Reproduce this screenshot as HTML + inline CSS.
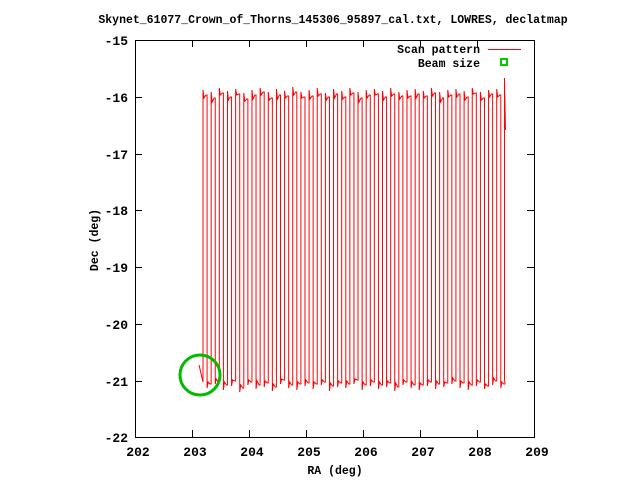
<!DOCTYPE html>
<html><head><meta charset="utf-8"><style>
html,body{margin:0;padding:0;background:#fff;}
svg{display:block}
text{font-family:"Liberation Mono",monospace;font-weight:bold;font-size:11.5px;fill:#000}
.b{font-size:13px}
</style></head><body>
<svg width="640" height="480" xmlns="http://www.w3.org/2000/svg">
<rect width="640" height="480" fill="#fff"/>
<text x="333" y="23" text-anchor="middle">Skynet_61077_Crown_of_Thorns_145306_95897_cal.txt, LOWRES, declatmap</text>
<g stroke="#000" stroke-width="1" fill="none" shape-rendering="crispEdges">
<rect x="135.5" y="40.5" width="399" height="397"/>
<path d="M135 97.5h7M135 154.5h7M135 210.5h7M135 267.5h7M135 324.5h7M135 381.5h7M534 97.5h-7M534 154.5h-7M534 210.5h-7M534 267.5h-7M534 324.5h-7M534 381.5h-7
M192.5 437v-7M249.5 437v-7M306.5 437v-7M363.5 437v-7M420.5 437v-7M477.5 437v-7M192.5 40v7M249.5 40v7M306.5 40v7M363.5 40v7M420.5 40v7M477.5 40v7"/>
</g>
<g text-anchor="end" class="b">
<text class="b" x="128" y="45">-15</text><text class="b" x="128" y="102">-16</text><text class="b" x="128" y="159">-17</text><text class="b" x="128" y="215">-18</text><text class="b" x="128" y="272">-19</text><text class="b" x="128" y="329">-20</text><text class="b" x="128" y="386">-21</text><text class="b" x="128" y="442">-22</text>
</g>
<g text-anchor="middle">
<text class="b" x="138" y="456">202</text><text class="b" x="195" y="456">203</text><text class="b" x="252" y="456">204</text><text class="b" x="309" y="456">205</text><text class="b" x="366" y="456">206</text><text class="b" x="423" y="456">207</text><text class="b" x="480" y="456">208</text><text class="b" x="537" y="456">209</text>
<text x="335" y="474">RA (deg)</text>
<text transform="translate(98,240) rotate(-90)">Dec (deg)</text>
</g>
<text x="480" y="53" text-anchor="end">Scan pattern</text>
<text x="480" y="67" text-anchor="end">Beam size</text>
<line x1="488" y1="49.5" x2="521" y2="49.5" stroke="#f00" stroke-width="1"/>
<rect x="501" y="59" width="6" height="6" fill="none" stroke="#0c0" stroke-width="2"/>
<g fill="none" stroke="#f00" stroke-width="1" transform="translate(203,0) scale(0.995,1) translate(-203,0)">
<path d="M199 365 L203 382 V90 l1,8 l2,-3 h1.1 V388 l1,-6 l2,2 h1.1 V92 l1,10 l2,-4 h1.1 V384 l1,-5 l2,3 h1.1 V88 l1,7 l2,-2 h1.1 V390 l1,-8 l2,3 h1.1 V91 l1,9 l2,-3 h1.1 V386 l1,-6 l2,1 h1.1 V89 l1,6 l2,-1 h1.1 V392 l1,-7 l2,3 h1.1 V93 l1,8 l2,-2 h1.1 V385 l1,-5 l2,2 h1.1 V90 l1,9 l2,-4 h1.1 V389 l1,-8 l2,4 h1.1 V88 l1,7 l2,-3 h1.1 V387 l1,-6 l2,2 h1.1 V92 l1,8 l2,-2 h1.1 V391 l1,-7 l2,3 h1.1 V89 l1,10 l2,-4 h1.1 V384 l1,-5 l2,1 h1.1 V91 l1,7 l2,-2 h1.1 V388 l1,-6 l2,3 h1.1 V87 l1,8 l2,-3 h1.1 V390 l1,-8 l2,2 h1.1 V92 l1,6 l2,-1 h1.1 V386 l1,-6 l2,3 h1.1 V90 l1,9 l2,-3 h1.1 V389 l1,-7 l2,2 h1.1 V88 l1,8 l2,-2 h1.1 V385 l1,-5 l2,2 h1.1 V93 l1,7 l2,-3 h1.1 V391 l1,-8 l2,3 h1.1 V89 l1,9 l2,-4 h1.1 V387 l1,-6 l2,2 h1.1 V91 l1,8 l2,-2 h1.1 V388 l1,-7 l2,3 h1.1 V88 l1,7 l2,-2 h1.1 V384 l1,-5 l2,1 h1.1 V92 l1,10 l2,-4 h1.1 V390 l1,-8 l2,3 h1.1 V90 l1,8 l2,-3 h1.1 V386 l1,-6 l2,2 h1.1 V89 l1,6 l2,-1 h1.1 V389 l1,-7 l2,3 h1.1 V91 l1,9 l2,-3 h1.1 V387 l1,-6 l2,2 h1.1 V88 l1,8 l2,-2 h1.1 V391 l1,-8 l2,4 h1.1 V92 l1,7 l2,-3 h1.1 V385 l1,-5 l2,2 h1.1 V90 l1,8 l2,-2 h1.1 V388 l1,-6 l2,3 h1.1 V89 l1,9 l2,-4 h1.1 V390 l1,-7 l2,2 h1.1 V91 l1,7 l2,-2 h1.1 V386 l1,-6 l2,2 h1.1 V88 l1,8 l2,-3 h1.1 V389 l1,-8 l2,3 h1.1 V92 l1,10 l2,-4 h1.1 V387 l1,-5 l2,1 h1.1 V90 l1,7 l2,-2 h1.1 V384 l1,-6 l2,3 h1.1 V89 l1,8 l2,-3 h1.1 V388 l1,-7 l2,2 h1.1 V91 l1,9 l2,-3 h1.1 V390 l1,-8 l2,3 h1.1 V88 l1,6 l2,-1 h1.1 V386 l1,-6 l2,2 h1.1 V92 l1,8 l2,-2 h1.1 V389 l1,-5 l2,2 h1.1 V90 l1,7 l2,-3 h1.1 V385 l1,-7 l2,3 h1.1 V89 l1,8 l2,-2 h1.1 V388 l1,-6 l2,2 h1.1 V382 L506 380 V78 l1,52"/>
</g>
<circle cx="200" cy="375" r="20" fill="none" stroke="#0b0" stroke-width="3"/>
</svg>
</body></html>
